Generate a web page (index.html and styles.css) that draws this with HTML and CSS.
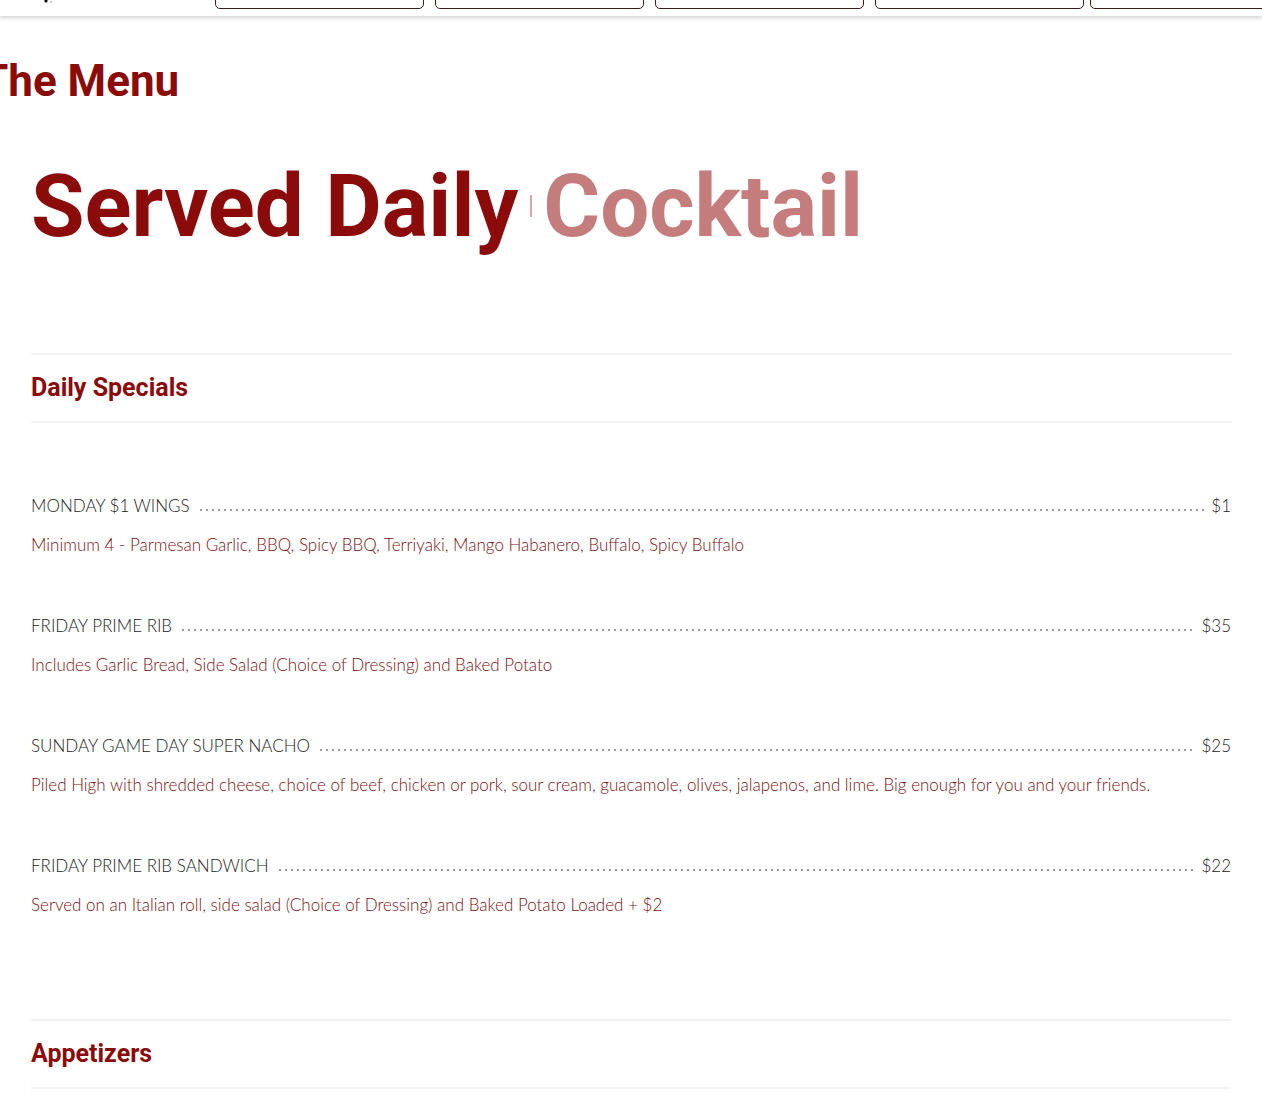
FILE: index.html
```html
<!DOCTYPE html>
<html lang="en">
<head>
  <meta charset="UTF-8">
  <meta name="viewport" content="width=device-width, initial-scale=1.0">
  <title>The Menu</title>
  <link rel="stylesheet" href="styles.css">
</head>
<body>
  <header class="topbar">
    <div class="logo">
      <svg width="12" height="6" viewBox="0 0 12 6"><circle cx="2" cy="1" r="1.6" fill="#111"/><circle cx="7" cy="2" r="1" fill="#bbb"/></svg>
    </div>
    <nav class="nav">
      <a class="nav-btn" href="#"></a>
      <a class="nav-btn" href="#"></a>
      <a class="nav-btn" href="#"></a>
      <a class="nav-btn" href="#"></a>
      <a class="nav-btn last" href="#"></a>
    </nav>
  </header>

  <main class="page">
    <h1 class="title">The Menu</h1>

    <h2 class="rotator">
      <span class="word-on">Served Daily</span>
      <span class="cursor"></span>
      <span class="word-off">Cocktail</span>
    </h2>

    <section class="menu-section">
      <h3 class="section-head">Daily Specials</h3>

      <div class="items">
        <div class="item">
          <div class="item-line">
            <span class="item-name">MONDAY $1 WINGS</span>
            <span class="dots"></span>
            <span class="item-price">$1</span>
          </div>
          <p class="item-desc">Minimum 4 - Parmesan Garlic, BBQ, Spicy BBQ, Terriyaki, Mango Habanero, Buffalo, Spicy Buffalo</p>
        </div>

        <div class="item">
          <div class="item-line">
            <span class="item-name">FRIDAY PRIME RIB</span>
            <span class="dots"></span>
            <span class="item-price">$35</span>
          </div>
          <p class="item-desc">Includes Garlic Bread, Side Salad (Choice of Dressing) and Baked Potato</p>
        </div>

        <div class="item">
          <div class="item-line">
            <span class="item-name">SUNDAY GAME DAY SUPER NACHO</span>
            <span class="dots"></span>
            <span class="item-price">$25</span>
          </div>
          <p class="item-desc">Piled High with shredded cheese, choice of beef, chicken or pork, sour cream, guacamole, olives, jalapenos, and lime. Big enough for you and your friends.</p>
        </div>

        <div class="item">
          <div class="item-line">
            <span class="item-name">FRIDAY PRIME RIB SANDWICH</span>
            <span class="dots"></span>
            <span class="item-price">$22</span>
          </div>
          <p class="item-desc">Served on an Italian roll, side salad (Choice of Dressing) and Baked Potato Loaded + $2</p>
        </div>
      </div>
    </section>

    <section class="menu-section">
      <h3 class="section-head">Appetizers</h3>
    </section>
  </main>
</body>
</html>
```

FILE: styles.css
```css
body {
  margin: 0;
  background: #fff;
  font-family: "Lato", "Open Sans", sans-serif;
  overflow: hidden;
}

.topbar {
  height: 16px;
  display: flex;
  align-items: flex-end;
  background: #fff;
  box-shadow: 0 2px 4px rgba(0, 0, 0, 0.18);
  position: relative;
  z-index: 2;
}

.logo {
  width: 215px;
  height: 16px;
  padding-left: 44px;
  box-sizing: border-box;
}

.logo svg {
  display: block;
}

.nav {
  display: flex;
  gap: 11px;
  align-self: stretch;
  flex: 1;
  overflow: hidden;
}

.nav-btn {
  display: block;
  width: 209px;
  height: 40px;
  margin-top: -31px;
  flex-shrink: 0;
  border: 1px solid #3b1d1d;
  border-radius: 5px;
  box-sizing: border-box;
}

.nav-btn.last {
  margin-left: -5px;
}

.page {
  padding: 0 31px;
}

.title {
  margin: 38px 0 0 -50px;
  font-family: Roboto, sans-serif;
  font-weight: 700;
  font-size: 44px;
  line-height: 54px;
  color: #8b0a0a;
}

.rotator {
  margin: 48px 0 0;
  display: flex;
  align-items: center;
  font-family: Roboto, sans-serif;
  font-weight: 700;
  font-size: 87px;
  line-height: 100px;
}

.word-on {
  color: #8b0a0a;
}

.cursor {
  width: 2px;
  height: 22px;
  margin: 0 11px 0 12px;
  background: #d9a6a6;
}

.word-off {
  color: #c47c7c;
}

.menu-section {
  margin-top: 97px;
}

.menu-section + .menu-section {
  margin-top: 47px;
}

.section-head {
  margin: 0;
  padding: 18px 0;
  border-top: 2px solid #f2f2f2;
  border-bottom: 2px solid #f2f2f2;
  font-family: Roboto, sans-serif;
  font-weight: 700;
  font-size: 25px;
  line-height: 30px;
  color: #8b0a0a;
}

.items {
  padding-top: 69px;
}

.item {
  min-height: 120px;
}

.item-line {
  display: flex;
  align-items: baseline;
  font-size: 17px;
  line-height: 28px;
  color: #222;
}

.item-name {
  font-weight: 300;
}

.dots {
  flex: 1;
  height: 4px;
  margin: 0 6px 0 8px;
  background-image: radial-gradient(circle, #999 0.9px, transparent 1.2px);
  background-size: 6px 4px;
  background-repeat: repeat-x;
}

.item-price {
  font-weight: 300;
}

.item-desc {
  margin: 11px 0 0;
  font-size: 17px;
  font-weight: 300;
  line-height: 28px;
  color: #7a1010;
}
```
